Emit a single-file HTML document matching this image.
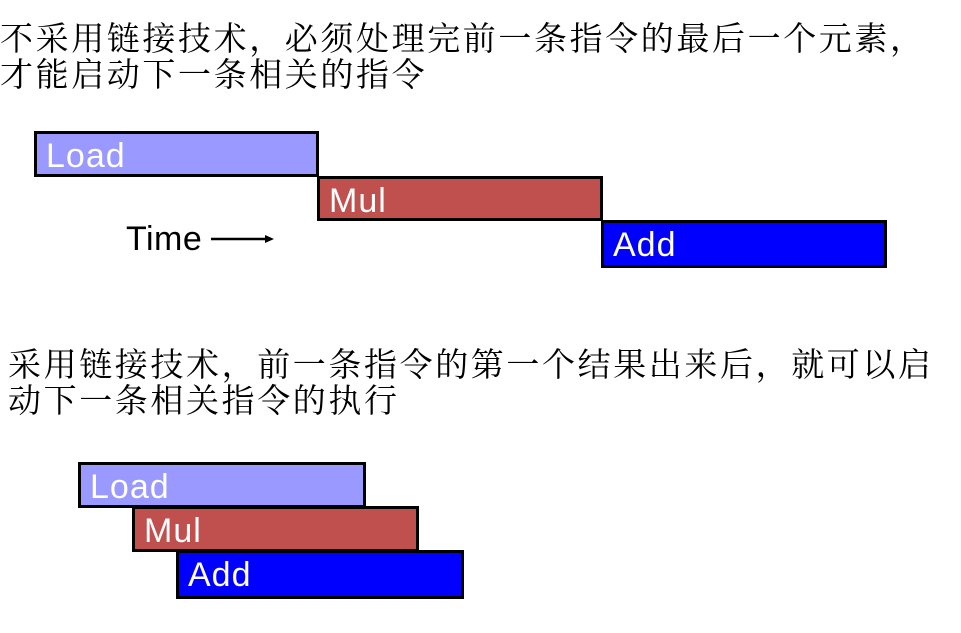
<!DOCTYPE html>
<html><head><meta charset="utf-8"><style>
body{margin:0;width:961px;height:633px;background:#fff;position:relative;overflow:hidden}
.t{position:absolute;font-family:"Liberation Serif","Noto Serif CJK SC",serif;font-size:33px;line-height:36px;color:#000;white-space:nowrap;letter-spacing:2.6px}
.b{position:absolute;box-sizing:border-box;border:3px solid #000;font-family:"Liberation Sans",sans-serif;font-size:34px;letter-spacing:1px;color:#fff;padding-left:9px;line-height:44px}
.l{background:#9999ff}.m{background:#c0504d}.a{background:#0000ff}
</style></head><body>
<div class="t" style="left:0;top:22px">不采用链接技术，必须处理完前一条指令的最后一个元素，<br>才能启动下一条相关的指令</div>
<div class="b l" style="left:34px;top:131px;width:285px;height:46px">Load</div>
<div class="b m" style="left:317px;top:176px;width:286px;height:45px">Mul</div>
<div class="b a" style="left:601px;top:220px;width:286px;height:48px">Add</div>
<div style="position:absolute;left:126px;top:220px;font-family:'Liberation Sans',sans-serif;font-size:34px;letter-spacing:0.5px;color:#000">Time</div>
<svg style="position:absolute;left:209px;top:232px" width="70" height="14"><line x1="2" y1="7" x2="58" y2="7" stroke="#000" stroke-width="2.5"/><polygon points="56,3 65,7 56,11" fill="#000"/></svg>
<div class="t" style="left:8px;top:348px">采用链接技术，前一条指令的第一个结果出来后，就可以启<br>动下一条相关指令的执行</div>
<div class="b l" style="left:78px;top:462px;width:288px;height:46px">Load</div>
<div class="b m" style="left:132px;top:506px;width:287px;height:46px">Mul</div>
<div class="b a" style="left:176px;top:550px;width:288px;height:49px">Add</div>
</body></html>
